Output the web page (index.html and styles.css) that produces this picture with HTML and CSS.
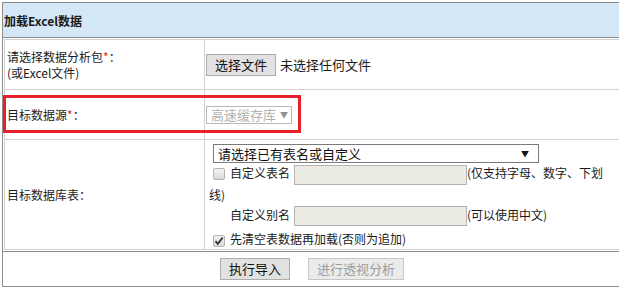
FILE: index.html
```html
<!DOCTYPE html>
<html>
<head>
	<meta charset="utf-8">
	<meta name="viewport" content="width=device-width, initial-scale=1.0">
	<link rel="stylesheet" href="styles.css">
	<title>加载Excel数据</title>
</head>
<body>
	<div class="panel">
		<div class="panel-head">加载Excel数据</div>
		<table class="form-table">
			<tr class="row-file">
				<td class="label">请选择数据分析包<span class="req">*</span>：<br>(或Excel文件)</td>
				<td class="field">
					<button type="button" class="btn">选择文件</button><span class="file-name">未选择任何文件</span>
				</td>
			</tr>
			<tr class="row-source">
				<td class="label">目标数据源<span class="req">*</span>：</td>
				<td class="field">
					<span class="select small is-disabled">
						<select disabled><option>高速缓存库</option></select>
						<span class="arrow">▼</span>
					</span>
				</td>
			</tr>
			<tr class="row-table">
				<td class="label">目标数据库表：</td>
				<td class="field field-top">
					<div class="table-opts">
						<div class="opt-line">
							<span class="select wide">
								<select><option>请选择已有表名或自定义</option></select>
								<span class="arrow">▼</span>
							</span>
						</div>
						<div class="opt-text"><span class="check"></span><span class="opt-label">自定义表名</span><input type="text" class="text-input" disabled>(仅支持字母、数字、下划线)</div>
						<div class="opt-text indent"><span class="opt-label">自定义别名</span><input type="text" class="text-input" disabled>(可以使用中文)</div>
						<div class="opt-check">
							<span class="check is-checked">
								<svg width="10" height="10" viewBox="0 0 10 10"><path d="M1.5 5.2 L3.8 7.8 L8.6 1.6" fill="none" stroke="#333" stroke-width="1.8"/></svg>
							</span>先清空表数据再加载(否则为追加)
						</div>
					</div>
				</td>
			</tr>
		</table>
		<div class="panel-foot">
			<button type="button" class="btn">执行导入</button>
			<button type="button" class="btn" disabled>进行透视分析</button>
		</div>
		<div class="highlight"></div>
	</div>
</body>
</html>
```

FILE: styles.css
```css
body {
	margin: 2px;
	overflow: hidden;
	background-color: white;
}
.panel {
	position: relative;
	width: 620px;
	box-sizing: border-box;
	border: 1px solid #8c8c8c;
	font-family: "Noto Sans CJK SC", "Liberation Sans", sans-serif;
	font-size: 12px;
	color: #1a1a1a;
}
.panel-head {
	height: 34px;
	display: flex;
	align-items: center;
	padding-left: 1px;
	background-color: #d3e7f6;
	border-bottom: 1px solid #8c8c8c;
	font-weight: bold;
}
.form-table {
	width: 616px;
	margin: 1px 0 1px 1px;
	border-collapse: separate;
	border-spacing: 0;
	border-top: 1px solid #d2d2d2;
	border-left: 1px solid #d2d2d2;
}
.form-table td {
	border-right: 1px solid #d2d2d2;
	border-bottom: 1px solid #d2d2d2;
	padding: 0;
	vertical-align: middle;
}
.row-file, .row-source {
	height: 50px;
}
.row-table {
	height: 109px;
}
.label {
	width: 200px;
	box-sizing: border-box;
	padding-left: 2px !important;
	line-height: 16px;
}
.req {
	color: #e41e1e;
}
.field {
	padding-left: 1px !important;
}
.field-top {
	vertical-align: top !important;
}
.btn {
	height: 22px;
	padding: 0 8px;
	margin: 0;
	border: 1px solid #adadad;
	border-radius: 0;
	background-color: #e1e1e1;
	font-family: "Noto Sans CJK SC", sans-serif;
	font-size: 13px;
	line-height: 20px;
	color: #111;
}
.btn:disabled {
	border-color: #c6c6c6;
	background-color: #ebebeb;
	color: #9c9c9c;
}
.file-name {
	margin-left: 4px;
	font-size: 13px;
}
.select {
	display: inline-flex;
	align-items: center;
	box-sizing: border-box;
	border: 1px solid #a6a6a6;
	background-color: white;
	vertical-align: middle;
	overflow: hidden;
}
.select select {
	flex: 1;
	min-width: 0;
	width: 100%;
	height: 100%;
	line-height: 16px;
	appearance: none;
	-webkit-appearance: none;
	border: none;
	background: transparent;
	padding: 0 0 0 4px;
	margin: 0;
	font-family: "Noto Sans CJK SC", sans-serif;
	font-size: 13px;
	color: #111;
	outline: none;
}
.select .arrow {
	flex: none;
	font-size: 8px;
	line-height: 10px;
	padding-right: 3px;
	color: #111;
}
.select.small {
	width: 86px;
	height: 18px;
}
.select.wide {
	width: 326px;
	height: 19px;
	margin-left: 4px;
	border-color: #7a7a7a;
}
.select.wide .arrow {
	padding-right: 9px;
}
.select.is-disabled {
	border-color: #b8b8b8;
}
.select.is-disabled select,
.select.is-disabled .arrow {
	color: #909090;
}
.table-opts {
	padding: 3px 0 0 3px;
}
.opt-line {
	height: 20px;
}
.opt-text {
	line-height: 20px;
}
.opt-text:first-of-type {
	margin-top: 1px;
}
.indent {
	padding-left: 21px;
}
.opt-label {
	margin-right: 4px;
}
.text-input {
	width: 173px;
	height: 20px;
	box-sizing: border-box;
	margin: 0;
	padding: 0;
	border: 1px solid #b3b3b3;
	background-color: #ebebe4;
	vertical-align: middle;
}
.check {
	display: inline-flex;
	align-items: center;
	justify-content: center;
	width: 12px;
	height: 12px;
	box-sizing: border-box;
	margin: 0 5px 0 4px;
	border: 1px solid #b4b4b4;
	border-radius: 2px;
	background: linear-gradient(#f3f3f3, #d9d9d9);
	vertical-align: -2px;
}
.opt-check {
	height: 20px;
	line-height: 20px;
	margin-top: 3px;
}
.panel-foot {
	height: 34px;
	display: flex;
	align-items: center;
	justify-content: center;
	gap: 18px;
	border-top: 1px solid #8c8c8c;
}
.highlight {
	position: absolute;
	left: 0;
	top: 92px;
	width: 298px;
	height: 38px;
	box-sizing: border-box;
	border: 3px solid #e8202a;
}
```
